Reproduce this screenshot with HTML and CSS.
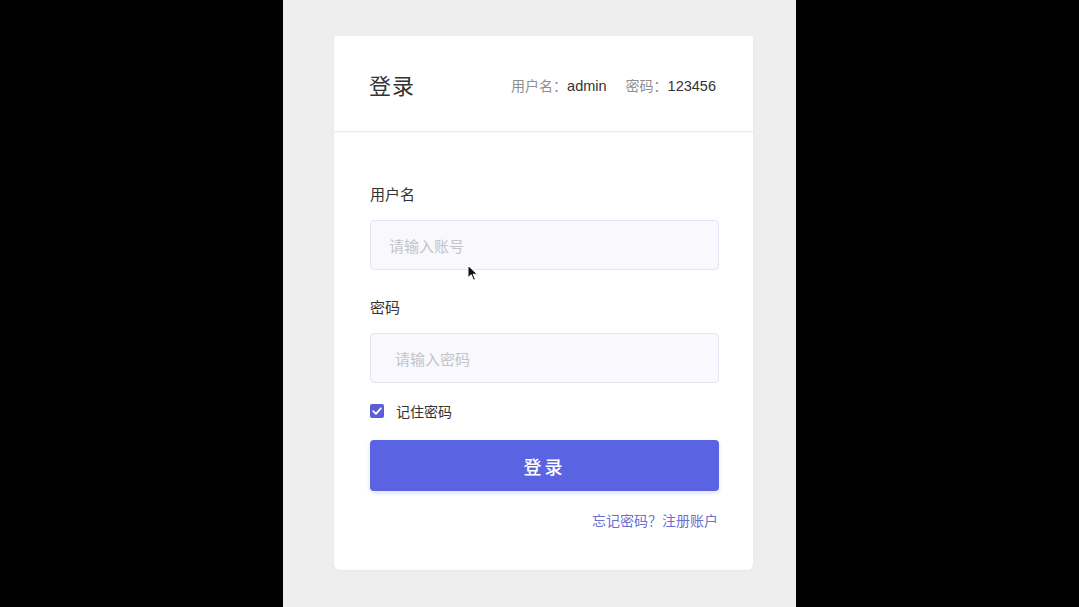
FILE: index.html
```html
<!DOCTYPE html>
<html lang="zh-CN">
<head>
<meta charset="utf-8">
<title>登录</title>
<link rel="stylesheet" href="styles.css">
</head>
<body>
<div class="stage">
  <div class="panel">
    <div class="card">
      <div class="card-head">
        <h1 class="title">登录</h1>
        <div class="hint">
          <span class="hint-key">用户名：</span><span class="hint-val">admin</span>
          <span class="hint-key hint-gap">密码：</span><span class="hint-val">123456</span>
        </div>
      </div>
      <form class="card-body">
        <label class="label">用户名</label>
        <div class="field"><input class="input" type="text" placeholder="请输入账号"></div>
        <label class="label label-next">密码</label>
        <div class="field"><input class="input input-pw" type="password" placeholder="请输入密码"></div>
        <div class="remember">
          <span class="check"><svg viewBox="0 0 14 14" width="14" height="14"><path d="M3.2 7.2 L5.9 9.8 L10.9 4.4" fill="none" stroke="#fff" stroke-width="1.8" stroke-linecap="round" stroke-linejoin="round"/></svg></span>
          <span class="remember-text">记住密码</span>
        </div>
        <button class="btn" type="button">登录</button>
        <div class="links"><a class="link">忘记密码？</a><a class="link">注册账户</a></div>
      </form>
      <svg class="cursor" viewBox="0 0 14 20" width="13" height="19"><path d="M1 1 L1 15 L4.5 11.6 L7 17.5 L9.2 16.5 L6.8 10.8 L11.6 10.8 Z" fill="#111" stroke="#fff" stroke-width="1.2" stroke-linejoin="round"/></svg>
    </div>
  </div>
</div>
</body>
</html>
```

FILE: styles.css
```css
html, body {
  margin: 0;
  padding: 0;
  background: #000;
  height: 100%;
}
body {
  font-family: "Liberation Sans", "Noto Sans CJK SC", sans-serif;
  color: #333;
}
.stage {
  display: flex;
  height: 607px;
  overflow: hidden;
}
.panel {
  margin-left: 283px;
  width: 513px;
  height: 607px;
  background: #eeeeee;
  padding-top: 36px;
  box-sizing: border-box;
}
.card {
  position: relative;
  margin-left: 51px;
  width: 419px;
  background: #fff;
  border-radius: 2px 2px 6px 6px;
  box-shadow: 0 1px 3px rgba(0,0,0,0.03);
}
.card-head {
  height: 95px;
  display: flex;
  align-items: center;
  justify-content: space-between;
  padding: 0 37px 0 35px;
  border-bottom: 1px solid #ececf0;
  box-shadow: 0 1px 2px rgba(0,0,0,0.03);
}
.title {
  margin: 0;
  font-family: "Noto Sans CJK SC", sans-serif;
  font-size: 22px;
  font-weight: 400;
  color: #333;
  letter-spacing: 1px;
}
.hint {
  font-size: 14px;
  display: flex;
  align-items: baseline;
  margin-top: 3px;
}
.hint-key {
  font-family: "Noto Sans CJK SC", sans-serif;
  color: #8f8f8f;
}
.hint-val {
  color: #333;
  font-size: 14.5px;
}
.hint-gap {
  margin-left: 19px;
}
.card-body {
  display: flex;
  flex-direction: column;
  padding: 51px 34px 40px 36px;
}
.label {
  font-family: "Noto Sans CJK SC", sans-serif;
  font-size: 15px;
  line-height: 22px;
  color: #333;
}
.label-next {
  margin-top: 26px;
}
.field {
  margin-top: 15px;
}
.input {
  display: block;
  width: 100%;
  height: 50px;
  box-sizing: border-box;
  border: 1px solid #e4e4f2;
  border-radius: 4px;
  background: #f9f9fd;
  padding: 0 18px;
  font-family: "Noto Sans CJK SC", sans-serif;
  font-size: 15px;
  color: #333;
  outline: none;
}
.input-pw {
  padding-left: 24px;
}
.input::placeholder {
  color: #c3c3cb;
}
.remember {
  margin-top: 18px;
  height: 20px;
  display: flex;
  align-items: center;
}
.check {
  width: 14px;
  height: 14px;
  border-radius: 2px;
  background: #5a5fd9;
  display: flex;
  align-items: center;
  justify-content: center;
}
.remember-text {
  margin-left: 12px;
  font-family: "Noto Sans CJK SC", sans-serif;
  font-size: 14px;
  color: #333;
}
.btn {
  margin-top: 19px;
  height: 51px;
  width: 100%;
  border: none;
  border-radius: 4px;
  background: #5a63e1;
  color: #fff;
  font-family: "Noto Sans CJK SC", sans-serif;
  font-size: 18px;
  font-weight: 500;
  letter-spacing: 3px;
  box-shadow: 0 2px 4px rgba(90,99,225,0.2);
}
.links {
  margin-top: 20px;
  display: flex;
  justify-content: flex-end;
  padding-right: 1px;
  font-family: "Noto Sans CJK SC", sans-serif;
  font-size: 14px;
  line-height: 19px;
}
.link {
  color: #6a6fd2;
  text-decoration: none;
}
.cursor {
  position: absolute;
  left: 133px;
  top: 228px;
}
```
